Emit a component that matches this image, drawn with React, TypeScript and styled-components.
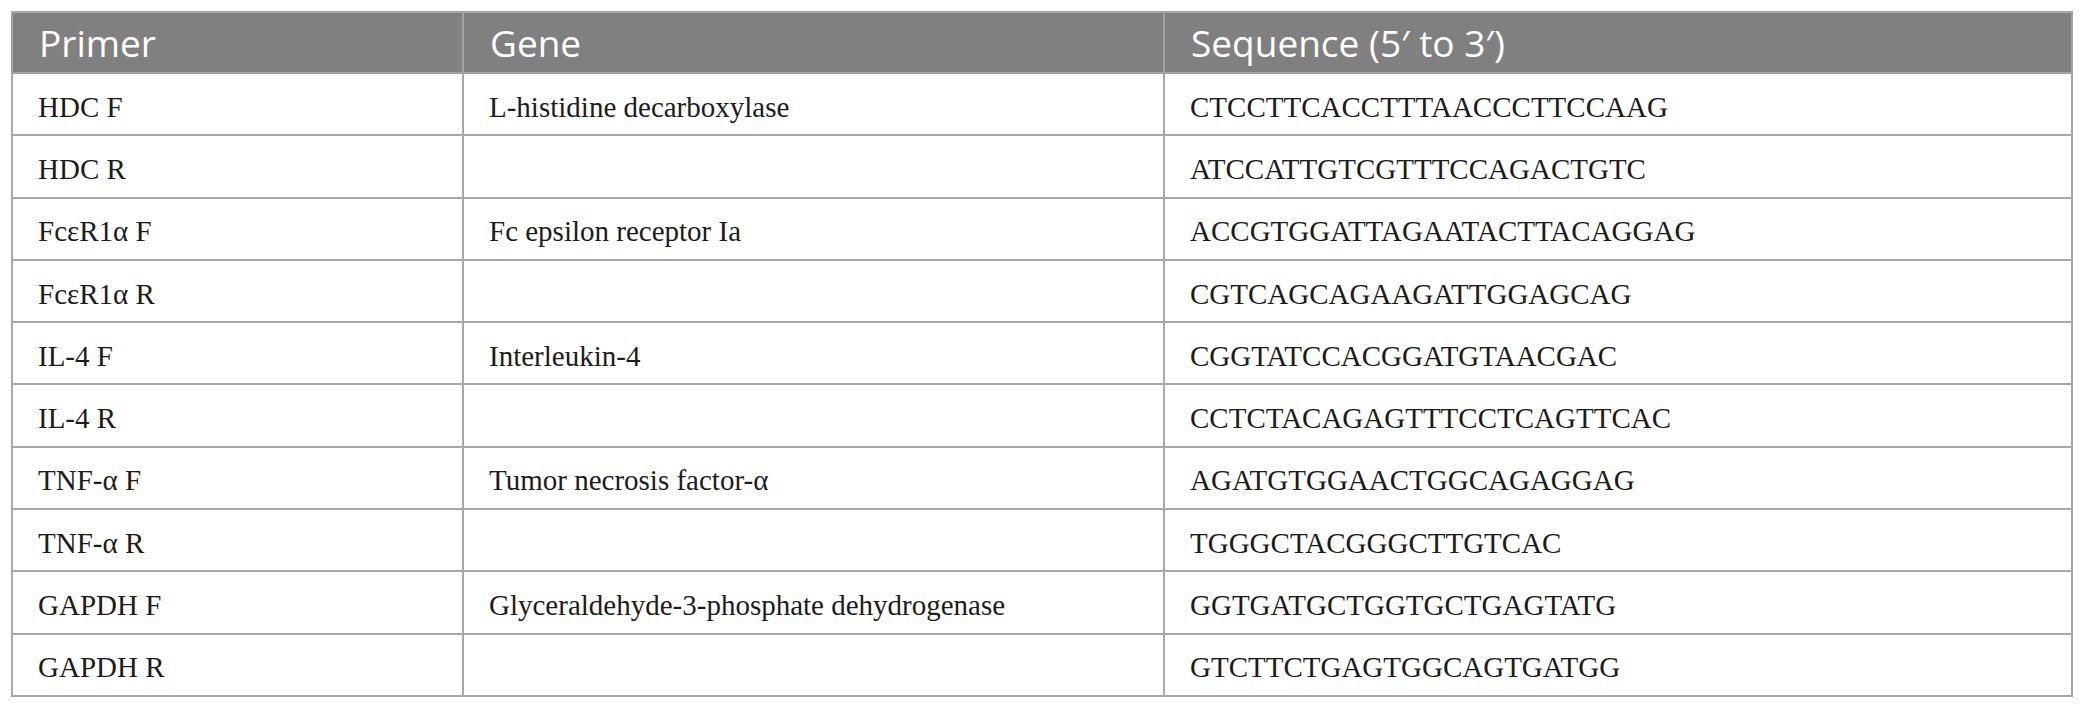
import React from "react";
import styled, { createGlobalStyle } from "styled-components";

const Global = createGlobalStyle`
  html, body { margin: 0; padding: 0; background: #ffffff; }
`;

const Page = styled.div`
  padding: 11px 0 0 11px;
`;

const Table = styled.table`
  width: 2060px;
  table-layout: fixed;
  border-collapse: collapse;
  border: 2px solid #a8a8a8;
`;

const Col = styled.col<{ $w: number }>`
  width: ${(p) => p.$w}px;
`;

const HeadCell = styled.th`
  box-sizing: border-box;
  height: 61px;
  background: #808080;
  color: #ffffff;
  font-family: "Open Sans", "Noto Sans", sans-serif;
  font-weight: 400;
  font-size: 37px;
  text-align: left;
  padding: 0 0 0 26px;
  border: 2px solid #a3a3a3;
  border-top-color: #a8a8a8;
  vertical-align: middle;
  white-space: nowrap;
`;

const Cell = styled.td`
  box-sizing: border-box;
  height: 62.3px;
  padding: 6px 0 0 25px;
  font-family: "Liberation Serif", "Times New Roman", serif;
  font-size: 29px;
  color: #1c1c1c;
  border: 2px solid #a8a8a8;
  vertical-align: middle;
  white-space: nowrap;
`;

const rows: [string, string, string][] = [
  ["HDC F", "L-histidine decarboxylase", "CTCCTTCACCTTTAACCCTTCCAAG"],
  ["HDC R", "", "ATCCATTGTCGTTTCCAGACTGTC"],
  ["FcεR1α F", "Fc epsilon receptor Ia", "ACCGTGGATTAGAATACTTACAGGAG"],
  ["FcεR1α R", "", "CGTCAGCAGAAGATTGGAGCAG"],
  ["IL-4 F", "Interleukin-4", "CGGTATCCACGGATGTAACGAC"],
  ["IL-4 R", "", "CCTCTACAGAGTTTCCTCAGTTCAC"],
  ["TNF-α F", "Tumor necrosis factor-α", "AGATGTGGAACTGGCAGAGGAG"],
  ["TNF-α R", "", "TGGGCTACGGGCTTGTCAC"],
  ["GAPDH F", "Glyceraldehyde-3-phosphate dehydrogenase", "GGTGATGCTGGTGCTGAGTATG"],
  ["GAPDH R", "", "GTCTTCTGAGTGGCAGTGATGG"],
];

export default function App() {
  return (
    <>
      <Global />
      <Page>
        <Table>
          <colgroup>
            <Col $w={451} />
            <Col $w={701} />
            <Col $w={908} />
          </colgroup>
          <thead>
            <tr>
              <HeadCell>Primer</HeadCell>
              <HeadCell>Gene</HeadCell>
              <HeadCell>Sequence (5′ to 3′)</HeadCell>
            </tr>
          </thead>
          <tbody>
            {rows.map((r) => (
              <tr key={r[0]}>
                <Cell>{r[0]}</Cell>
                <Cell>{r[1]}</Cell>
                <Cell>{r[2]}</Cell>
              </tr>
            ))}
          </tbody>
        </Table>
      </Page>
    </>
  );
}
